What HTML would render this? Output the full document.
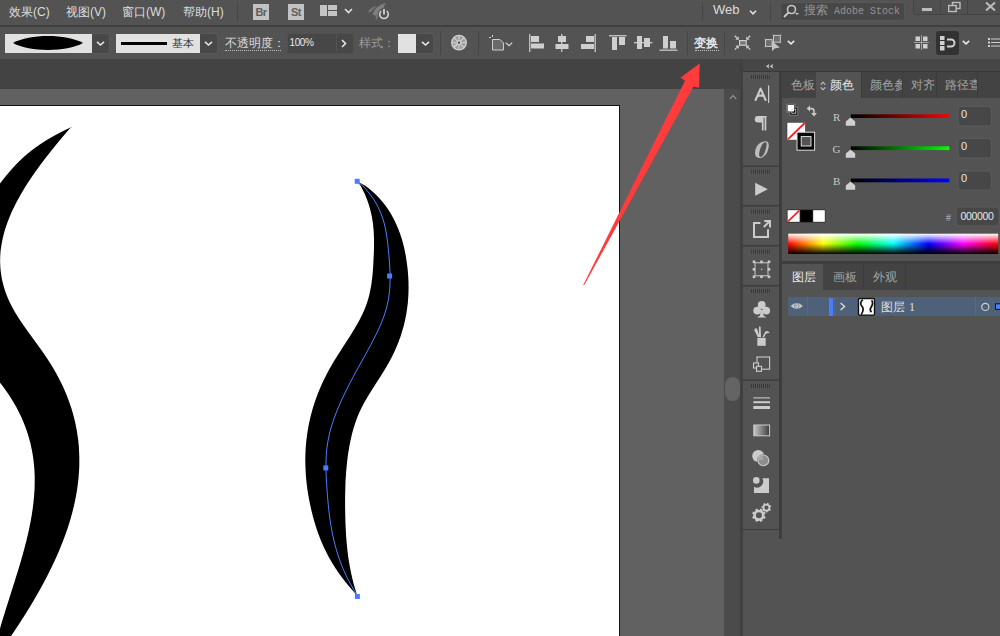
<!DOCTYPE html>
<html><head><meta charset="utf-8">
<style>
*{box-sizing:border-box;margin:0;padding:0}
html,body{width:1000px;height:636px;overflow:hidden;background:#535353;font-family:"Liberation Sans",sans-serif;color:#d6d6d6}
.a{position:absolute}
.menu{position:absolute;font-size:12px;color:#dcdcdc;top:5px;white-space:nowrap;line-height:14px}
.sepv{position:absolute;width:1px;background:#464646}
svg{position:absolute;overflow:visible}
.lbl{position:absolute;font-size:12px;line-height:14px;white-space:nowrap}
.dd{position:absolute;top:33px;height:20.5px;background:#484848;border:1px solid #585858;border-left:none;border-radius:0 3px 3px 0}
</style></head><body>
<!-- ================= MENU BAR ================= -->
<div class="a" style="left:0;top:25px;width:1000px;height:2px;background:#404040"></div>
<div class="menu" style="left:9px">效果(C)</div>
<div class="menu" style="left:66px">视图(V)</div>
<div class="menu" style="left:122px">窗口(W)</div>
<div class="menu" style="left:183px">帮助(H)</div>
<div class="sepv" style="left:237px;top:2px;height:19px"></div>
<div class="a" style="left:253px;top:4px;width:16px;height:16px;background:#c2c2c2;color:#5e5e5e;font-size:11px;font-weight:bold;line-height:16px;text-align:center;letter-spacing:-0.5px">Br</div>
<div class="a" style="left:288px;top:4px;width:16px;height:16px;background:#c2c2c2;color:#5e5e5e;font-size:11px;font-weight:bold;line-height:16px;text-align:center;letter-spacing:-0.5px">St</div>
<svg style="left:320px;top:5px" width="17" height="11"><rect x="0" y="0" width="7" height="11" fill="#c4c4c4"/><rect x="8" y="0" width="9" height="5" fill="#c4c4c4"/><rect x="8" y="6" width="9" height="5" fill="#c4c4c4"/></svg>
<svg style="left:344px;top:8px" width="9" height="6"><polyline points="1,1 4.5,4.5 8,1" fill="none" stroke="#e0e0e0" stroke-width="1.6"/></svg>
<svg style="left:366px;top:1px" width="26" height="20"><path d="M2,10.5 Q5,6 10.5,5 Q7,9 4,11.5 Z" fill="#777"/><path d="M6.5,13 Q9,5 19.5,2 Q17,10 9.5,15 Z" fill="#7e7e7e"/><path d="M9.5,15 L11.5,13 L13,14.5 L10,19 Z" fill="#777"/><circle cx="18" cy="13.3" r="6.2" fill="#535353"/><path d="M15.2,10 A4.3,4.3 0 1 0 20.8,10" fill="none" stroke="#d2d2d2" stroke-width="1.6"/><line x1="18" y1="8" x2="18" y2="13.5" stroke="#d2d2d2" stroke-width="1.8"/></svg>

<div class="sepv" style="left:702px;top:2px;height:19px"></div>
<div class="menu" style="left:713px;top:3px;font-size:13px">Web</div>
<svg style="left:749px;top:10px" width="8" height="5"><polyline points="1,0.8 4,3.8 7,0.8" fill="none" stroke="#e0e0e0" stroke-width="1.6"/></svg>
<div class="sepv" style="left:770px;top:2px;height:19px"></div>
<div class="a" style="left:779.5px;top:1.5px;width:125.5px;height:19.5px;background:#484848;border:1px solid #575757;border-radius:3px"></div>
<svg style="left:783px;top:4px" width="16" height="14"><circle cx="8.5" cy="5.5" r="4" fill="none" stroke="#c8c8c8" stroke-width="1.6"/><line x1="5.5" y1="8.5" x2="1" y2="13" stroke="#c8c8c8" stroke-width="2"/><path d="M12,9 L16,9 L14,11 Z" fill="#c8c8c8"/></svg>
<div class="a" style="left:804px;top:3px;font-size:11.5px;line-height:14px;color:#949494;white-space:nowrap">搜索<span style="font-family:'Liberation Mono',monospace;font-size:10px;position:relative;top:0px"> Adobe Stock</span></div>
<div class="a" style="left:913px;top:-2px;width:90px;height:17px;background:#505050;border:1px solid #444;border-radius:3px"></div>
<div class="a" style="left:940px;top:0;width:1px;height:15px;background:#444"></div>
<div class="a" style="left:967px;top:0;width:1px;height:15px;background:#444"></div>
<div class="a" style="left:922px;top:8px;width:10px;height:3px;background:#bdbdbd"></div>
<svg style="left:948px;top:2px" width="13" height="10"><rect x="4.5" y="0.5" width="7.5" height="6" fill="none" stroke="#bdbdbd" stroke-width="1.4"/><rect x="0.7" y="3.5" width="7.5" height="6" fill="#505050" stroke="#bdbdbd" stroke-width="1.4"/></svg>
<svg style="left:985px;top:2px" width="11" height="9"><path d="M1,0.5 L10,8.5 M10,0.5 L1,8.5" stroke="#bdbdbd" stroke-width="2"/></svg>

<!-- ================= CONTROL BAR ================= -->
<div class="a" style="left:5px;top:34px;width:87px;height:19px;background:#e1e1e1"></div>
<svg style="left:13px;top:36px" width="70" height="14"><path d="M0,7 C17,-2.3 53,-2.3 70,7 C53,16.3 17,16.3 0,7 Z" fill="#000"/></svg>
<div class="dd" style="left:92px;width:18px"></div>
<svg style="left:96px;top:41px" width="9" height="5"><polyline points="1,0.8 4.5,4 8,0.8" fill="none" stroke="#e6e6e6" stroke-width="1.6"/></svg>

<div class="a" style="left:116px;top:34px;width:84px;height:19px;background:#e1e1e1"></div>
<div class="a" style="left:121px;top:42px;width:46px;height:3px;background:#000"></div>
<div class="a" style="left:172px;top:36px;font-size:11px;line-height:14px;color:#3a3a3a;font-family:'Liberation Serif',serif">基本</div>
<div class="dd" style="left:200px;width:18px"></div>
<svg style="left:204px;top:41px" width="9" height="5"><polyline points="1,0.8 4.5,4 8,0.8" fill="none" stroke="#e6e6e6" stroke-width="1.6"/></svg>

<div class="lbl" style="left:225px;top:36px;color:#dcdcdc;font-size:12px">不透明度：</div>
<div class="a" style="left:225px;top:50px;width:56px;height:1px;border-top:1px dotted #bdbdbd"></div>
<div class="a" style="left:286.5px;top:33px;width:67px;height:20.5px;background:#474747;border:1px solid #505050;border-radius:3px"></div>
<div class="a" style="left:336px;top:34px;width:1px;height:18px;background:#535353"></div>
<div class="lbl" style="left:289.5px;top:36px;font-size:10px;color:#e8e8e8;letter-spacing:-0.4px">100%</div>
<svg style="left:341px;top:39px" width="6" height="9"><polyline points="1,1 4.5,4.5 1,8" fill="none" stroke="#e6e6e6" stroke-width="1.6"/></svg>
<div class="lbl" style="left:359px;top:36px;color:#9d9d9d">样式：</div>
<div class="a" style="left:398px;top:34px;width:18px;height:19px;background:#e1e1e1"></div>
<div class="dd" style="left:416px;width:18px"></div>
<svg style="left:421px;top:41px" width="9" height="5"><polyline points="1,0.8 4.5,4 8,0.8" fill="none" stroke="#e6e6e6" stroke-width="1.6"/></svg>
<div class="sepv" style="left:440px;top:31px;height:24px"></div>
<!-- recolor wheel -->
<svg style="left:451px;top:35px" width="16" height="16"><circle cx="8" cy="7.7" r="7.9" fill="#d0d0d0"/><circle cx="8" cy="7.7" r="6.6" fill="#9c9c9c"/><path d="M2,10 L7,7.7 L5,12.5 Z" fill="#b4b4b4"/><g stroke="#d0d0d0" stroke-width="1.1"><line x1="8" y1="0.5" x2="8" y2="15"/><line x1="0.5" y1="7.7" x2="15.5" y2="7.7"/><line x1="2.7" y1="2.4" x2="13.3" y2="13"/><line x1="13.3" y1="2.4" x2="2.7" y2="13"/></g><circle cx="8" cy="7.7" r="2.4" fill="#d0d0d0"/><circle cx="8" cy="7.7" r="1.15" fill="#454545"/></svg>
<div class="sepv" style="left:478px;top:31px;height:24px"></div>
<!-- doc icon -->
<svg style="left:489px;top:35px" width="16" height="16"><line x1="0" y1="2.5" x2="2" y2="2.5" stroke="#cfcfcf"/><line x1="3.5" y1="0" x2="3.5" y2="2" stroke="#cfcfcf"/><path d="M3.5,4.5 L11,4.5 L14.5,8 L14.5,15 L3.5,15 Z" fill="#6a6a6a" stroke="#cfcfcf" stroke-width="1"/></svg>
<svg style="left:505px;top:42px" width="8" height="5"><polyline points="0.8,0.8 4,3.8 7.2,0.8" fill="none" stroke="#cfcfcf" stroke-width="1.2"/></svg>
<!-- align icons -->
<svg style="left:528px;top:34px" width="18" height="18"><rect x="1" y="0" width="1.4" height="18" fill="#bfbfbf"/><rect x="3" y="2" width="8" height="6" fill="#cfcfcf"/><rect x="3" y="9.5" width="13" height="5" fill="#cfcfcf"/></svg>
<svg style="left:554px;top:34px" width="18" height="18"><rect x="7" y="0" width="1.4" height="18" fill="#bfbfbf"/><rect x="4" y="2" width="8" height="6" fill="#cfcfcf"/><rect x="1.5" y="10" width="13" height="5" fill="#cfcfcf"/></svg>
<svg style="left:579px;top:34px" width="18" height="18"><rect x="15.5" y="0" width="1.4" height="18" fill="#bfbfbf"/><rect x="7" y="2" width="8" height="6" fill="#cfcfcf"/><rect x="2" y="10" width="13" height="5" fill="#cfcfcf"/></svg>
<svg style="left:608px;top:34px" width="19" height="17"><rect x="1" y="1" width="17.5" height="1.4" fill="#bfbfbf"/><rect x="4" y="3" width="5" height="13" fill="#cfcfcf"/><rect x="11" y="3" width="6" height="8" fill="#cfcfcf"/></svg>
<svg style="left:634px;top:35px" width="19" height="15"><rect x="0" y="7" width="18.5" height="1.4" fill="#bfbfbf"/><rect x="3" y="1" width="5" height="13" fill="#cfcfcf"/><rect x="10" y="3" width="6" height="9" fill="#cfcfcf"/></svg>
<svg style="left:659px;top:35px" width="19" height="17"><rect x="0.5" y="14.5" width="18" height="1.4" fill="#bfbfbf"/><rect x="4" y="1" width="5" height="12.5" fill="#cfcfcf"/><rect x="11" y="6" width="6" height="7.5" fill="#cfcfcf"/></svg>
<div class="sepv" style="left:687px;top:31px;height:24px"></div>
<div class="lbl" style="left:694px;top:36px;font-size:12px;color:#e6e6e6;font-weight:bold">变换</div>
<div class="a" style="left:695px;top:50px;width:24px;height:1px;border-top:1px dotted #bdbdbd"></div>
<div class="sepv" style="left:724px;top:31px;height:24px"></div>
<!-- isolate icon -->
<svg style="left:734px;top:35px" width="18" height="16"><rect x="5.6" y="5.6" width="6.6" height="4.6" fill="#767676" stroke="#cfcfcf" stroke-width="1.2"/><g stroke="#cfcfcf" stroke-width="1.3" fill="none"><path d="M0.8,0.8 L3.5,3.5 M16.2,0.8 L13.5,3.5 M0.8,14.6 L3.5,11.9 M16.2,14.6 L13.5,11.9"/></g><g fill="#cfcfcf"><path d="M4.8,4.8 L4.8,1.4 L1.4,4.8 Z M12.2,4.8 L12.2,1.4 L15.6,4.8 Z M4.8,10.6 L4.8,14 L1.4,10.6 Z M12.2,10.6 L12.2,14 L15.6,10.6 Z"/></g></svg>
<!-- select similar -->
<svg style="left:764px;top:34px" width="18" height="18"><rect x="1.5" y="5.6" width="6.6" height="6.8" fill="#6e6e6e" stroke="#c8c8c8" stroke-width="1"/><rect x="9.5" y="1.4" width="6.8" height="6.8" fill="#6e6e6e" stroke="#c8c8c8" stroke-width="1"/><g stroke="#c8c8c8" stroke-width="1"><path d="M1.5,5.6 L0.6,4.7 M8.1,12.4 L9,13.3 M1.5,12.4 L0.6,13.3 M9.5,1.4 L8.6,0.5 M16.3,1.4 L17.2,0.5 M16.3,8.2 L17.2,9.1 M9.5,8.2 L8.6,9.1"/></g><path d="M8,7.2 L8,17.2 L10.6,14.4 L15.8,13.6 Z" fill="#c4c4c4"/></svg>
<svg style="left:787px;top:40px" width="8" height="5"><polyline points="0.8,0.8 4,3.8 7.2,0.8" fill="none" stroke="#e6e6e6" stroke-width="1.6"/></svg>
<!-- pixel grid -->
<svg style="left:914px;top:35px" width="15" height="15"><rect x="0" y="7" width="15" height="1" fill="#a0a0a0"/><rect x="7" y="0" width="1" height="15" fill="#a0a0a0"/><rect x="1.5" y="1.5" width="4.5" height="4.5" fill="#cfcfcf"/><rect x="9" y="1.5" width="4.5" height="4.5" fill="#cfcfcf"/><rect x="1.5" y="9" width="4.5" height="4.5" fill="#cfcfcf"/><rect x="9" y="9" width="4.5" height="4.5" fill="#cfcfcf"/></svg>
<div class="a" style="left:936px;top:31px;width:23px;height:24px;background:#323232;border-radius:3px"></div>
<svg style="left:940px;top:36px" width="15" height="15"><rect x="0" y="0" width="4.5" height="4" fill="#d0d0d0"/><rect x="0" y="5" width="4.5" height="4" fill="#d0d0d0"/><rect x="0" y="10" width="4.5" height="4.5" fill="#d0d0d0"/><path d="M7,3.5 L11,3.5 A3.5,3.5 0 0 1 11,10.5 L7,10.5" fill="none" stroke="#d0d0d0" stroke-width="2"/></svg>
<svg style="left:962px;top:40px" width="8" height="5"><polyline points="0.8,0.8 4,3.8 7.2,0.8" fill="none" stroke="#e6e6e6" stroke-width="1.6"/></svg>
<svg style="left:988px;top:38px" width="14" height="10"><rect x="0" y="0" width="2" height="2" fill="#d0d0d0"/><rect x="0" y="3.5" width="2" height="2" fill="#d0d0d0"/><rect x="0" y="7" width="2" height="2" fill="#d0d0d0"/><rect x="3" y="0.5" width="11" height="1" fill="#d0d0d0"/><rect x="3" y="4" width="11" height="1" fill="#d0d0d0"/><rect x="3" y="7.5" width="11" height="1" fill="#d0d0d0"/></svg>
<!-- CONTROL_END -->

<!-- ================= TAB BAR / CANVAS ================= -->
<div class="a" style="left:0;top:59px;width:740px;height:29.5px;background:#434343"></div>
<div class="a" style="left:0;top:88.5px;width:724px;height:548px;background:#616161"></div>
<div class="a" style="left:724px;top:88.5px;width:16px;height:548px;background:#4b4b4b"></div>
<svg style="left:729px;top:94px" width="8" height="6"><polyline points="0.8,5 4,1.5 7.2,5" fill="none" stroke="#8a8a8a" stroke-width="1.3"/></svg>
<div class="a" style="left:725px;top:376.5px;width:15px;height:24.5px;background:#646464;border-radius:7.5px"></div>
<div class="a" style="left:740px;top:59px;width:3px;height:577px;background:#404040"></div>
<div class="a" style="left:-2px;top:105px;width:622px;height:540px;background:#fff;border:1px solid #111"></div>
<svg style="left:0;top:0" width="1000" height="636"><path d="M72.8,126.7 L70.3,128.0 L68.5,130.0 L66.8,132.0 L65.1,134.0 L63.4,136.0 L61.7,138.0 L60.0,140.0 L58.4,142.0 L56.7,144.0 L55.1,146.0 L53.5,148.0 L51.8,150.0 L50.3,152.0 L48.7,154.0 L47.1,156.0 L45.6,158.0 L44.0,160.0 L42.5,162.0 L41.0,164.0 L39.5,166.0 L38.1,168.0 L36.6,170.0 L35.2,172.0 L33.8,174.0 L32.4,176.0 L31.1,178.0 L29.7,180.0 L28.4,182.0 L27.1,184.0 L25.8,186.0 L24.6,188.0 L23.4,190.0 L22.2,192.0 L21.0,194.0 L19.9,196.0 L18.8,198.0 L17.7,200.0 L16.6,202.0 L15.6,204.0 L14.6,206.0 L13.6,208.0 L12.6,210.0 L11.7,212.0 L10.8,214.0 L10.0,216.0 L9.2,218.0 L8.4,220.0 L7.6,222.0 L6.9,224.0 L6.2,226.0 L5.5,228.0 L4.9,230.0 L4.3,232.0 L3.8,234.0 L3.3,236.0 L2.8,238.0 L2.4,240.0 L2.0,242.0 L1.6,244.0 L1.3,246.0 L1.0,248.0 L0.7,250.0 L0.5,252.0 L0.4,254.0 L0.2,256.0 L0.2,258.0 L0.1,260.0 L0.1,262.0 L0.2,264.0 L0.3,266.0 L0.4,268.0 L0.6,270.0 L0.8,272.0 L1.1,274.0 L1.4,276.0 L1.7,278.0 L2.1,280.0 L2.6,282.0 L3.1,284.0 L3.6,286.0 L4.2,288.0 L4.8,290.0 L5.5,292.0 L6.2,294.0 L7.0,296.0 L7.8,298.0 L8.7,300.0 L9.6,302.0 L10.6,304.0 L11.6,306.0 L12.7,308.0 L13.8,310.0 L14.9,312.0 L16.1,314.0 L17.4,316.0 L18.6,318.0 L19.9,320.0 L21.3,322.0 L22.6,324.0 L24.0,326.0 L25.4,328.0 L26.8,330.0 L28.3,332.0 L29.7,334.0 L31.2,336.0 L32.6,338.0 L34.1,340.0 L35.5,342.0 L37.0,344.0 L38.4,346.0 L39.9,348.0 L41.3,350.0 L42.7,352.0 L44.1,354.0 L45.5,356.0 L46.8,358.0 L48.1,360.0 L49.4,362.0 L50.7,364.0 L51.9,366.0 L53.1,368.0 L54.3,370.0 L55.4,372.0 L56.6,374.0 L57.6,376.0 L58.7,378.0 L59.7,380.0 L60.7,382.0 L61.7,384.0 L62.7,386.0 L63.6,388.0 L64.5,390.0 L65.3,392.0 L66.2,394.0 L67.0,396.0 L67.7,398.0 L68.5,400.0 L69.2,402.0 L69.9,404.0 L70.6,406.0 L71.3,408.0 L71.9,410.0 L72.5,412.0 L73.0,414.0 L73.6,416.0 L74.1,418.0 L74.6,420.0 L75.1,422.0 L75.5,424.0 L75.9,426.0 L76.3,428.0 L76.7,430.0 L77.0,432.0 L77.3,434.0 L77.6,436.0 L77.9,438.0 L78.2,440.0 L78.4,442.0 L78.6,444.0 L78.8,446.0 L78.9,448.0 L79.0,450.0 L79.1,452.0 L79.2,454.0 L79.3,456.0 L79.3,458.0 L79.3,460.0 L79.3,462.0 L79.3,464.0 L79.3,466.0 L79.2,468.0 L79.1,470.0 L79.0,472.0 L78.8,474.0 L78.7,476.0 L78.5,478.0 L78.3,480.0 L78.1,482.0 L77.8,484.0 L77.6,486.0 L77.3,488.0 L77.0,490.0 L76.7,492.0 L76.3,494.0 L76.0,496.0 L75.6,498.0 L75.2,500.0 L74.8,502.0 L74.3,504.0 L73.9,506.0 L73.4,508.0 L72.9,510.0 L72.4,512.0 L71.9,514.0 L71.3,516.0 L70.8,518.0 L70.2,520.0 L69.6,522.0 L69.0,524.0 L68.3,526.0 L67.7,528.0 L67.0,530.0 L66.3,532.0 L65.6,534.0 L64.9,536.0 L64.1,538.0 L63.4,540.0 L62.6,542.0 L61.8,544.0 L61.0,546.0 L60.2,548.0 L59.4,550.0 L58.5,552.0 L57.7,554.0 L56.8,556.0 L55.9,558.0 L55.0,560.0 L54.1,562.0 L53.1,564.0 L52.2,566.0 L51.2,568.0 L50.2,570.0 L49.2,572.0 L48.2,574.0 L47.2,576.0 L46.2,578.0 L45.1,580.0 L44.1,582.0 L43.0,584.0 L41.9,586.0 L40.8,588.0 L39.7,590.0 L38.6,592.0 L37.4,594.0 L36.3,596.0 L35.1,598.0 L34.0,600.0 L32.8,602.0 L31.6,604.0 L30.4,606.0 L29.2,608.0 L27.9,610.0 L26.7,612.0 L25.5,614.0 L24.2,616.0 L22.9,618.0 L21.6,620.0 L20.4,622.0 L19.1,624.0 L17.7,626.0 L16.4,628.0 L15.1,630.0 L13.8,632.0 L12.4,634.0 L11.1,636.0 L9.7,638.0 L8.3,640.0 L6.9,642.0 L5.5,644.0 L4.1,646.0 L-4.7,646.0 L-4.2,644.0 L-3.7,642.0 L-3.2,640.0 L-2.7,638.0 L-2.1,636.0 L-1.6,634.0 L-1.0,632.0 L-0.4,630.0 L0.2,628.0 L0.7,626.0 L1.3,624.0 L1.9,622.0 L2.5,620.0 L3.1,618.0 L3.7,616.0 L4.4,614.0 L5.0,612.0 L5.6,610.0 L6.2,608.0 L6.9,606.0 L7.5,604.0 L8.1,602.0 L8.8,600.0 L9.4,598.0 L10.0,596.0 L10.7,594.0 L11.3,592.0 L11.9,590.0 L12.6,588.0 L13.2,586.0 L13.8,584.0 L14.5,582.0 L15.1,580.0 L15.7,578.0 L16.3,576.0 L17.0,574.0 L17.6,572.0 L18.2,570.0 L18.8,568.0 L19.4,566.0 L20.0,564.0 L20.6,562.0 L21.2,560.0 L21.7,558.0 L22.3,556.0 L22.9,554.0 L23.4,552.0 L24.0,550.0 L24.5,548.0 L25.0,546.0 L25.5,544.0 L26.1,542.0 L26.6,540.0 L27.0,538.0 L27.5,536.0 L28.0,534.0 L28.4,532.0 L28.9,530.0 L29.3,528.0 L29.7,526.0 L30.1,524.0 L30.5,522.0 L30.9,520.0 L31.2,518.0 L31.6,516.0 L31.9,514.0 L32.2,512.0 L32.5,510.0 L32.8,508.0 L33.0,506.0 L33.3,504.0 L33.5,502.0 L33.7,500.0 L33.9,498.0 L34.1,496.0 L34.2,494.0 L34.4,492.0 L34.5,490.0 L34.6,488.0 L34.6,486.0 L34.7,484.0 L34.7,482.0 L34.7,480.0 L34.7,478.0 L34.7,476.0 L34.6,474.0 L34.5,472.0 L34.4,470.0 L34.3,468.0 L34.1,466.0 L33.9,464.0 L33.7,462.0 L33.5,460.0 L33.2,458.0 L32.9,456.0 L32.6,454.0 L32.2,452.0 L31.9,450.0 L31.4,448.0 L31.0,446.0 L30.6,444.0 L30.1,442.0 L29.5,440.0 L29.0,438.0 L28.4,436.0 L27.8,434.0 L27.1,432.0 L26.5,430.0 L25.7,428.0 L25.0,426.0 L24.2,424.0 L23.4,422.0 L22.6,420.0 L21.7,418.0 L20.8,416.0 L19.8,414.0 L18.8,412.0 L17.8,410.0 L16.8,408.0 L15.7,406.0 L14.5,404.0 L13.4,402.0 L12.1,400.0 L10.9,398.0 L9.6,396.0 L8.3,394.0 L6.9,392.0 L5.5,390.0 L4.1,388.0 L2.6,386.0 L1.1,384.0 L-0.5,382.0 L-2.1,380.0 L-3.8,378.0 L-5.5,376.0 L-60.0,376.0 L-60.0,194.0 L-8.3,194.0 L-6.7,192.0 L-5.1,190.0 L-3.5,188.0 L-2.0,186.0 L-0.4,184.0 L1.2,182.0 L2.7,180.0 L4.3,178.0 L5.9,176.0 L7.6,174.0 L9.3,172.0 L11.0,170.0 L12.8,168.0 L14.6,166.0 L16.5,164.0 L18.5,162.0 L20.5,160.0 L22.7,158.0 L24.9,156.0 L27.2,154.0 L29.7,152.0 L32.2,150.0 L34.9,148.0 L37.7,146.0 L40.6,144.0 L43.6,142.0 L46.8,140.0 L50.2,138.0 L53.7,136.0 L57.4,134.0 L61.2,132.0 L65.2,130.0 L69.4,128.0Z" fill="#000"/><path d="M357.4,181.6 L365.7,186.0 L368.3,188.0 L370.7,190.0 L373.0,192.0 L375.2,194.0 L377.2,196.0 L379.1,198.0 L380.9,200.0 L382.6,202.0 L384.2,204.0 L385.7,206.0 L387.2,208.0 L388.5,210.0 L389.8,212.0 L391.0,214.0 L392.1,216.0 L393.2,218.0 L394.2,220.0 L395.2,222.0 L396.1,224.0 L397.0,226.0 L397.9,228.0 L398.7,230.0 L399.4,232.0 L400.2,234.0 L400.8,236.0 L401.5,238.0 L402.1,240.0 L402.7,242.0 L403.2,244.0 L403.7,246.0 L404.2,248.0 L404.6,250.0 L405.0,252.0 L405.4,254.0 L405.8,256.0 L406.1,258.0 L406.4,260.0 L406.7,262.0 L407.0,264.0 L407.2,266.0 L407.5,268.0 L407.7,270.0 L407.9,272.0 L408.0,274.0 L408.2,276.0 L408.3,278.0 L408.4,280.0 L408.5,282.0 L408.5,284.0 L408.5,286.0 L408.6,288.0 L408.5,290.0 L408.5,292.0 L408.4,294.0 L408.3,296.0 L408.2,298.0 L408.0,300.0 L407.9,302.0 L407.7,304.0 L407.4,306.0 L407.2,308.0 L406.9,310.0 L406.6,312.0 L406.3,314.0 L405.9,316.0 L405.5,318.0 L405.1,320.0 L404.6,322.0 L404.2,324.0 L403.7,326.0 L403.1,328.0 L402.5,330.0 L401.9,332.0 L401.3,334.0 L400.7,336.0 L400.0,338.0 L399.2,340.0 L398.5,342.0 L397.7,344.0 L396.9,346.0 L396.0,348.0 L395.2,350.0 L394.2,352.0 L393.3,354.0 L392.3,356.0 L391.3,358.0 L390.2,360.0 L389.2,362.0 L388.0,364.0 L386.9,366.0 L385.7,368.0 L384.5,370.0 L383.3,372.0 L382.0,374.0 L380.8,376.0 L379.5,378.0 L378.2,380.0 L376.9,382.0 L375.6,384.0 L374.4,386.0 L373.1,388.0 L371.8,390.0 L370.6,392.0 L369.3,394.0 L368.1,396.0 L366.9,398.0 L365.8,400.0 L364.6,402.0 L363.5,404.0 L362.5,406.0 L361.4,408.0 L360.5,410.0 L359.5,412.0 L358.7,414.0 L357.8,416.0 L357.0,418.0 L356.3,420.0 L355.6,422.0 L354.9,424.0 L354.3,426.0 L353.6,428.0 L353.1,430.0 L352.5,432.0 L352.0,434.0 L351.5,436.0 L351.1,438.0 L350.6,440.0 L350.2,442.0 L349.8,444.0 L349.4,446.0 L349.1,448.0 L348.8,450.0 L348.4,452.0 L348.1,454.0 L347.8,456.0 L347.6,458.0 L347.3,460.0 L347.1,462.0 L346.9,464.0 L346.7,466.0 L346.5,468.0 L346.3,470.0 L346.1,472.0 L346.0,474.0 L345.9,476.0 L345.7,478.0 L345.6,480.0 L345.5,482.0 L345.4,484.0 L345.4,486.0 L345.3,488.0 L345.3,490.0 L345.2,492.0 L345.2,494.0 L345.1,496.0 L345.1,498.0 L345.1,500.0 L345.1,502.0 L345.1,504.0 L345.1,506.0 L345.1,508.0 L345.2,510.0 L345.2,512.0 L345.2,514.0 L345.3,516.0 L345.3,518.0 L345.4,520.0 L345.4,522.0 L345.5,524.0 L345.6,526.0 L345.7,528.0 L345.8,530.0 L345.9,532.0 L346.0,534.0 L346.1,536.0 L346.3,538.0 L346.4,540.0 L346.6,542.0 L346.8,544.0 L347.0,546.0 L347.2,548.0 L347.4,550.0 L347.6,552.0 L347.9,554.0 L348.1,556.0 L348.4,558.0 L348.7,560.0 L349.0,562.0 L349.4,564.0 L349.7,566.0 L350.1,568.0 L350.5,570.0 L350.9,572.0 L351.3,574.0 L351.8,576.0 L352.2,578.0 L352.7,580.0 L353.2,582.0 L353.7,584.0 L354.3,586.0 L354.9,588.0 L355.5,590.0 L356.1,592.0 L357.2,596.4 L354.1,592.0 L352.2,590.0 L350.5,588.0 L348.8,586.0 L347.1,584.0 L345.5,582.0 L343.9,580.0 L342.4,578.0 L340.9,576.0 L339.4,574.0 L338.0,572.0 L336.7,570.0 L335.3,568.0 L334.1,566.0 L332.8,564.0 L331.6,562.0 L330.5,560.0 L329.3,558.0 L328.2,556.0 L327.2,554.0 L326.2,552.0 L325.2,550.0 L324.2,548.0 L323.3,546.0 L322.4,544.0 L321.6,542.0 L320.7,540.0 L319.9,538.0 L319.2,536.0 L318.4,534.0 L317.7,532.0 L317.0,530.0 L316.3,528.0 L315.7,526.0 L315.1,524.0 L314.5,522.0 L313.9,520.0 L313.3,518.0 L312.8,516.0 L312.3,514.0 L311.8,512.0 L311.3,510.0 L310.9,508.0 L310.4,506.0 L310.0,504.0 L309.6,502.0 L309.2,500.0 L308.8,498.0 L308.5,496.0 L308.1,494.0 L307.8,492.0 L307.5,490.0 L307.2,488.0 L307.0,486.0 L306.7,484.0 L306.5,482.0 L306.3,480.0 L306.1,478.0 L305.9,476.0 L305.8,474.0 L305.7,472.0 L305.6,470.0 L305.5,468.0 L305.4,466.0 L305.4,464.0 L305.3,462.0 L305.3,460.0 L305.3,458.0 L305.4,456.0 L305.4,454.0 L305.5,452.0 L305.6,450.0 L305.7,448.0 L305.9,446.0 L306.0,444.0 L306.2,442.0 L306.4,440.0 L306.7,438.0 L306.9,436.0 L307.2,434.0 L307.5,432.0 L307.8,430.0 L308.2,428.0 L308.5,426.0 L308.9,424.0 L309.3,422.0 L309.8,420.0 L310.2,418.0 L310.7,416.0 L311.2,414.0 L311.8,412.0 L312.3,410.0 L312.9,408.0 L313.5,406.0 L314.2,404.0 L314.8,402.0 L315.5,400.0 L316.2,398.0 L317.0,396.0 L317.7,394.0 L318.5,392.0 L319.3,390.0 L320.2,388.0 L321.0,386.0 L321.9,384.0 L322.8,382.0 L323.8,380.0 L324.8,378.0 L325.8,376.0 L326.8,374.0 L327.8,372.0 L328.9,370.0 L330.0,368.0 L331.2,366.0 L332.3,364.0 L333.5,362.0 L334.7,360.0 L336.0,358.0 L337.2,356.0 L338.5,354.0 L339.8,352.0 L341.0,350.0 L342.3,348.0 L343.6,346.0 L344.9,344.0 L346.2,342.0 L347.5,340.0 L348.8,338.0 L350.1,336.0 L351.3,334.0 L352.5,332.0 L353.8,330.0 L355.0,328.0 L356.1,326.0 L357.3,324.0 L358.4,322.0 L359.5,320.0 L360.5,318.0 L361.5,316.0 L362.5,314.0 L363.4,312.0 L364.3,310.0 L365.1,308.0 L365.9,306.0 L366.6,304.0 L367.3,302.0 L367.9,300.0 L368.5,298.0 L369.0,296.0 L369.5,294.0 L369.9,292.0 L370.3,290.0 L370.7,288.0 L371.1,286.0 L371.4,284.0 L371.7,282.0 L371.9,280.0 L372.2,278.0 L372.4,276.0 L372.6,274.0 L372.8,272.0 L372.9,270.0 L373.1,268.0 L373.2,266.0 L373.3,264.0 L373.4,262.0 L373.5,260.0 L373.6,258.0 L373.7,256.0 L373.8,254.0 L373.9,252.0 L373.9,250.0 L374.0,248.0 L374.0,246.0 L374.0,244.0 L374.0,242.0 L374.0,240.0 L374.0,238.0 L373.9,236.0 L373.8,234.0 L373.7,232.0 L373.6,230.0 L373.4,228.0 L373.2,226.0 L373.0,224.0 L372.7,222.0 L372.4,220.0 L372.1,218.0 L371.7,216.0 L371.3,214.0 L370.8,212.0 L370.3,210.0 L369.8,208.0 L369.2,206.0 L368.6,204.0 L367.9,202.0 L367.2,200.0 L366.4,198.0 L365.6,196.0 L364.8,194.0 L363.8,192.0 L362.8,190.0 L361.8,188.0 L360.7,186.0Z" fill="#000"/><path d="M357.4,181.6 L362.9,186.0 L364.8,188.0 L366.6,190.0 L368.2,192.0 L369.8,194.0 L371.3,196.0 L372.7,198.0 L374.1,200.0 L375.3,202.0 L376.5,204.0 L377.5,206.0 L378.5,208.0 L379.5,210.0 L380.4,212.0 L381.2,214.0 L381.9,216.0 L382.6,218.0 L383.2,220.0 L383.8,222.0 L384.4,224.0 L384.8,226.0 L385.3,228.0 L385.7,230.0 L386.1,232.0 L386.4,234.0 L386.7,236.0 L387.0,238.0 L387.3,240.0 L387.5,242.0 L387.8,244.0 L388.0,246.0 L388.2,248.0 L388.4,250.0 L388.6,252.0 L388.8,254.0 L388.9,256.0 L389.1,258.0 L389.3,260.0 L389.4,262.0 L389.6,264.0 L389.7,266.0 L389.8,268.0 L389.9,270.0 L390.0,272.0 L390.1,274.0 L390.1,276.0 L390.1,278.0 L390.1,280.0 L390.0,282.0 L390.0,284.0 L389.9,286.0 L389.8,288.0 L389.6,290.0 L389.4,292.0 L389.2,294.0 L388.9,296.0 L388.6,298.0 L388.3,300.0 L387.9,302.0 L387.4,304.0 L387.0,306.0 L386.5,308.0 L385.9,310.0 L385.3,312.0 L384.6,314.0 L384.0,316.0 L383.2,318.0 L382.5,320.0 L381.7,322.0 L380.9,324.0 L380.0,326.0 L379.1,328.0 L378.2,330.0 L377.3,332.0 L376.3,334.0 L375.3,336.0 L374.3,338.0 L373.3,340.0 L372.2,342.0 L371.2,344.0 L370.1,346.0 L369.0,348.0 L368.0,350.0 L366.9,352.0 L365.8,354.0 L364.7,356.0 L363.5,358.0 L362.4,360.0 L361.3,362.0 L360.2,364.0 L359.1,366.0 L358.0,368.0 L356.9,370.0 L355.8,372.0 L354.7,374.0 L353.7,376.0 L352.6,378.0 L351.5,380.0 L350.5,382.0 L349.4,384.0 L348.4,386.0 L347.4,388.0 L346.4,390.0 L345.4,392.0 L344.4,394.0 L343.5,396.0 L342.5,398.0 L341.6,400.0 L340.7,402.0 L339.8,404.0 L339.0,406.0 L338.1,408.0 L337.3,410.0 L336.5,412.0 L335.7,414.0 L335.0,416.0 L334.2,418.0 L333.5,420.0 L332.9,422.0 L332.2,424.0 L331.6,426.0 L331.0,428.0 L330.4,430.0 L329.9,432.0 L329.4,434.0 L329.0,436.0 L328.5,438.0 L328.2,440.0 L327.8,442.0 L327.5,444.0 L327.2,446.0 L326.9,448.0 L326.7,450.0 L326.5,452.0 L326.4,454.0 L326.3,456.0 L326.1,458.0 L326.1,460.0 L326.0,462.0 L326.0,464.0 L326.0,466.0 L326.0,468.0 L326.0,470.0 L326.1,472.0 L326.1,474.0 L326.2,476.0 L326.3,478.0 L326.4,480.0 L326.5,482.0 L326.6,484.0 L326.8,486.0 L326.9,488.0 L327.0,490.0 L327.2,492.0 L327.3,494.0 L327.5,496.0 L327.7,498.0 L327.8,500.0 L328.0,502.0 L328.2,504.0 L328.4,506.0 L328.6,508.0 L328.8,510.0 L329.1,512.0 L329.3,514.0 L329.5,516.0 L329.8,518.0 L330.1,520.0 L330.4,522.0 L330.7,524.0 L331.0,526.0 L331.4,528.0 L331.7,530.0 L332.1,532.0 L332.5,534.0 L332.9,536.0 L333.4,538.0 L333.8,540.0 L334.3,542.0 L334.8,544.0 L335.3,546.0 L335.9,548.0 L336.4,550.0 L337.0,552.0 L337.6,554.0 L338.3,556.0 L339.0,558.0 L339.7,560.0 L340.4,562.0 L341.2,564.0 L341.9,566.0 L342.8,568.0 L343.6,570.0 L344.5,572.0 L345.4,574.0 L346.4,576.0 L347.3,578.0 L348.4,580.0 L349.4,582.0 L350.5,584.0 L351.6,586.0 L352.8,588.0 L354.0,590.0 L355.2,592.0 L357.2,596.4" fill="none" stroke="#4a7cff" stroke-width="1"/><rect x="354.7" y="178.8" width="5" height="5" fill="#4a7cff"/><rect x="387.1" y="273.5" width="5" height="5" fill="#4a7cff"/><rect x="323.3" y="465.4" width="5" height="5" fill="#4a7cff"/><rect x="354.9" y="594.0" width="5" height="5" fill="#4a7cff"/>
<path d="M699.7,63.2 L680.5,77.7 L685,80.8 L583,285.5 L584.6,284.6 L693.5,86.5 L699.1,87.7 Z" fill="#ff3b3b"/></svg>
<!-- CANVAS_END -->

<!-- ================= DOCK ================= -->
<div class="a" style="left:743px;top:59px;width:257px;height:12px;background:#474747"></div>
<svg style="left:766px;top:63.5px" width="8" height="5"><path d="M0,2.3 L3.4,0 L2.6,2.3 L3.4,4.6 Z M3.8,2.3 L7.2,0 L6.4,2.3 L7.2,4.6 Z" fill="#d0d0d0"/></svg>
<div class="a" style="left:743px;top:71px;width:257px;height:1px;background:#393939"></div>
<div class="a" style="left:743px;top:72px;width:36px;height:564px;background:#3d3d3d"></div>
<div class="a" style="left:743px;top:530px;width:36px;height:106px;background:#535353"></div>
<div class="a" style="left:779px;top:72px;width:2.5px;height:467px;background:#3d3d3d"></div>
<svg style="left:0;top:0" width="1000" height="636"><rect x="743" y="72.0" width="36" height="93.5" fill="#535353"/><rect x="743" y="167.0" width="36" height="38.0" fill="#535353"/><rect x="743" y="206.5" width="36" height="38.5" fill="#535353"/><rect x="743" y="246.5" width="36" height="38.5" fill="#535353"/><rect x="743" y="286.5" width="36" height="93.0" fill="#535353"/><rect x="743" y="381.0" width="36" height="148.0" fill="#535353"/><rect x="751.0" y="75.0" width="1" height="4" fill="#3a3a3a"/><rect x="753.0" y="75.0" width="1" height="4" fill="#3a3a3a"/><rect x="755.0" y="75.0" width="1" height="4" fill="#3a3a3a"/><rect x="757.0" y="75.0" width="1" height="4" fill="#3a3a3a"/><rect x="759.0" y="75.0" width="1" height="4" fill="#3a3a3a"/><rect x="761.0" y="75.0" width="1" height="4" fill="#3a3a3a"/><rect x="763.0" y="75.0" width="1" height="4" fill="#3a3a3a"/><rect x="765.0" y="75.0" width="1" height="4" fill="#3a3a3a"/><rect x="767.0" y="75.0" width="1" height="4" fill="#3a3a3a"/><rect x="769.0" y="75.0" width="1" height="4" fill="#3a3a3a"/><rect x="751.0" y="169.5" width="1" height="4" fill="#3a3a3a"/><rect x="753.0" y="169.5" width="1" height="4" fill="#3a3a3a"/><rect x="755.0" y="169.5" width="1" height="4" fill="#3a3a3a"/><rect x="757.0" y="169.5" width="1" height="4" fill="#3a3a3a"/><rect x="759.0" y="169.5" width="1" height="4" fill="#3a3a3a"/><rect x="761.0" y="169.5" width="1" height="4" fill="#3a3a3a"/><rect x="763.0" y="169.5" width="1" height="4" fill="#3a3a3a"/><rect x="765.0" y="169.5" width="1" height="4" fill="#3a3a3a"/><rect x="767.0" y="169.5" width="1" height="4" fill="#3a3a3a"/><rect x="769.0" y="169.5" width="1" height="4" fill="#3a3a3a"/><rect x="751.0" y="209.5" width="1" height="4" fill="#3a3a3a"/><rect x="753.0" y="209.5" width="1" height="4" fill="#3a3a3a"/><rect x="755.0" y="209.5" width="1" height="4" fill="#3a3a3a"/><rect x="757.0" y="209.5" width="1" height="4" fill="#3a3a3a"/><rect x="759.0" y="209.5" width="1" height="4" fill="#3a3a3a"/><rect x="761.0" y="209.5" width="1" height="4" fill="#3a3a3a"/><rect x="763.0" y="209.5" width="1" height="4" fill="#3a3a3a"/><rect x="765.0" y="209.5" width="1" height="4" fill="#3a3a3a"/><rect x="767.0" y="209.5" width="1" height="4" fill="#3a3a3a"/><rect x="769.0" y="209.5" width="1" height="4" fill="#3a3a3a"/><rect x="751.0" y="249.5" width="1" height="4" fill="#3a3a3a"/><rect x="753.0" y="249.5" width="1" height="4" fill="#3a3a3a"/><rect x="755.0" y="249.5" width="1" height="4" fill="#3a3a3a"/><rect x="757.0" y="249.5" width="1" height="4" fill="#3a3a3a"/><rect x="759.0" y="249.5" width="1" height="4" fill="#3a3a3a"/><rect x="761.0" y="249.5" width="1" height="4" fill="#3a3a3a"/><rect x="763.0" y="249.5" width="1" height="4" fill="#3a3a3a"/><rect x="765.0" y="249.5" width="1" height="4" fill="#3a3a3a"/><rect x="767.0" y="249.5" width="1" height="4" fill="#3a3a3a"/><rect x="769.0" y="249.5" width="1" height="4" fill="#3a3a3a"/><rect x="751.0" y="289.0" width="1" height="4" fill="#3a3a3a"/><rect x="753.0" y="289.0" width="1" height="4" fill="#3a3a3a"/><rect x="755.0" y="289.0" width="1" height="4" fill="#3a3a3a"/><rect x="757.0" y="289.0" width="1" height="4" fill="#3a3a3a"/><rect x="759.0" y="289.0" width="1" height="4" fill="#3a3a3a"/><rect x="761.0" y="289.0" width="1" height="4" fill="#3a3a3a"/><rect x="763.0" y="289.0" width="1" height="4" fill="#3a3a3a"/><rect x="765.0" y="289.0" width="1" height="4" fill="#3a3a3a"/><rect x="767.0" y="289.0" width="1" height="4" fill="#3a3a3a"/><rect x="769.0" y="289.0" width="1" height="4" fill="#3a3a3a"/><rect x="751.0" y="384.0" width="1" height="4" fill="#3a3a3a"/><rect x="753.0" y="384.0" width="1" height="4" fill="#3a3a3a"/><rect x="755.0" y="384.0" width="1" height="4" fill="#3a3a3a"/><rect x="757.0" y="384.0" width="1" height="4" fill="#3a3a3a"/><rect x="759.0" y="384.0" width="1" height="4" fill="#3a3a3a"/><rect x="761.0" y="384.0" width="1" height="4" fill="#3a3a3a"/><rect x="763.0" y="384.0" width="1" height="4" fill="#3a3a3a"/><rect x="765.0" y="384.0" width="1" height="4" fill="#3a3a3a"/><rect x="767.0" y="384.0" width="1" height="4" fill="#3a3a3a"/><rect x="769.0" y="384.0" width="1" height="4" fill="#3a3a3a"/>
<path d="M755.6,100 L760.6,88.6 L765.6,100 M757.6,95.6 L763.6,95.6" fill="none" stroke="#cbcbcb" stroke-width="2.1" stroke-linejoin="round" stroke-linecap="round"/><rect x="768" y="85.5" width="1.2" height="17.5" fill="#cbcbcb"/>
<path d="M763,116 L757.8,116 Q754.8,116 754.8,119.3 Q754.8,122.6 757.8,122.6 L763,122.6 Z" fill="#cbcbcb"/><rect x="762" y="116" width="4.4" height="1.6" fill="#cbcbcb"/><rect x="761.9" y="116" width="1.7" height="14.5" fill="#cbcbcb"/><rect x="764.6" y="116" width="1.7" height="14.5" fill="#cbcbcb"/>
<path fill-rule="evenodd" fill="#bdbdbd" d="M765.6,141.3 C769.5,141.3 769.3,146.5 767.6,151.3 C765.8,156.2 762.2,158 759.2,158 C755,158 754.2,153.8 755.8,148.6 C757.4,143.6 761,141.3 765.6,141.3 Z M765.2,142.3 C763.2,142.3 761.3,145.2 760,149.6 C758.8,153.8 758.7,157 760.5,157 C762.6,157 764.3,154 765.6,149.8 C766.9,145.6 767.2,142.3 765.2,142.3 Z"/>
<path d="M755.2,182.8 L767.8,189.3 L755.2,195.8 Z" fill="#cbcbcb"/>
<path d="M760.4,223 L754,223 L754,236.9 L768,236.9 L768,229.3" fill="none" stroke="#cbcbcb" stroke-width="2"/><path d="M763.8,227 L769.6,221.2 M764.3,221 L770,221 L770,227.6" fill="none" stroke="#cbcbcb" stroke-width="2"/>
<rect x="755" y="262.8" width="13" height="13" fill="none" stroke="#cbcbcb" stroke-width="1"/>
<rect x="752.7" y="260.5" width="2.6" height="2.6" fill="#cbcbcb"/><rect x="752.7" y="268.0" width="2.6" height="2.6" fill="#cbcbcb"/><rect x="752.7" y="275.5" width="2.6" height="2.6" fill="#cbcbcb"/><rect x="760.2" y="260.5" width="2.6" height="2.6" fill="#cbcbcb"/><rect x="760.2" y="275.5" width="2.6" height="2.6" fill="#cbcbcb"/><rect x="767.7" y="260.5" width="2.6" height="2.6" fill="#cbcbcb"/><rect x="767.7" y="268.0" width="2.6" height="2.6" fill="#cbcbcb"/><rect x="767.7" y="275.5" width="2.6" height="2.6" fill="#cbcbcb"/><rect x="761" y="268.8" width="1.2" height="1.2" fill="#cbcbcb"/><circle cx="761.7" cy="305" r="3.9" fill="#cbcbcb"/><circle cx="757.2" cy="310.6" r="3.9" fill="#cbcbcb"/><circle cx="766.2" cy="310.6" r="3.9" fill="#cbcbcb"/><path d="M760.7,310 L762.7,310 L763.5,315.5 L766.5,317.6 L757,317.6 L760,315.5 Z" fill="#cbcbcb"/><rect x="757.3" y="337.8" width="8.4" height="8" fill="#cbcbcb"/><path d="M754.2,330 Q755,327.5 757,328.5 L759.5,337 L757.8,337 Z" fill="#cbcbcb"/><path d="M758.8,337 L759,327 Q759.7,325.5 760.6,327 L761,337 Z" fill="#cbcbcb"/><path d="M762.5,337 L765,332 Q767,329.5 769.8,332.8 Q767,333 765.6,334 L764.2,337 Z" fill="#cbcbcb"/><rect x="757" y="357" width="12.6" height="12.2" fill="none" stroke="#cbcbcb" stroke-width="1.1"/><rect x="753.5" y="363" width="5" height="5" fill="#535353" stroke="#cbcbcb" stroke-width="1.1"/><rect x="756.5" y="366.3" width="5" height="5" fill="#535353" stroke="#cbcbcb" stroke-width="1.1"/><rect x="753.3" y="397.1" width="16.7" height="1.5" fill="#a8a8a8"/><rect x="753.3" y="401.2" width="16.7" height="2" fill="#cbcbcb"/><rect x="753.3" y="406" width="16.7" height="3" fill="#cbcbcb"/><defs><linearGradient id="gr" x1="0" x2="1"><stop offset="0" stop-color="#c8c8c8"/><stop offset="1" stop-color="#3c3c3c"/></linearGradient><linearGradient id="sp" x1="0" x2="1"><stop offset="0" stop-color="#ff0000"/><stop offset="0.1667" stop-color="#ffff00"/><stop offset="0.3333" stop-color="#00ff00"/><stop offset="0.5" stop-color="#00ffff"/><stop offset="0.6667" stop-color="#0000ff"/><stop offset="0.8333" stop-color="#ff00ff"/><stop offset="1" stop-color="#ff0000"/></linearGradient><linearGradient id="spv" x1="0" x2="0" y1="0" y2="1"><stop offset="0" stop-color="#fff" stop-opacity="1"/><stop offset="0.5" stop-color="#fff" stop-opacity="0"/><stop offset="0.5" stop-color="#000" stop-opacity="0"/><stop offset="1" stop-color="#000" stop-opacity="1"/></linearGradient></defs><rect x="753.8" y="425" width="15.8" height="10.8" fill="url(#gr)" stroke="#cbcbcb" stroke-width="1"/><circle cx="758.2" cy="455.9" r="6" fill="#cbcbcb"/><circle cx="763.4" cy="460.4" r="6.2" fill="#535353"/><circle cx="763.4" cy="460.4" r="5.4" fill="#8e8e8e" stroke="#cbcbcb" stroke-width="1.1"/><path d="M758.5,460 A5,5 0 0 1 763,455.5 L763,460 Z" fill="#a5a5a5"/><path d="M762.3,478.2 L769,478.2 L769,493 L754,493 L754,486.8 A6.2,6.2 0 0 0 762.3,478.2 Z" fill="#cbcbcb"/><circle cx="756.3" cy="480.4" r="3.3" fill="#cbcbcb"/><circle cx="758.90" cy="515.30" r="4.30" fill="none" stroke="#cbcbcb" stroke-width="2.60"/><rect x="757.70" y="508.50" width="2.40" height="2.50" fill="#cbcbcb" transform="rotate(22.5 758.90 515.30)"/><rect x="757.70" y="508.50" width="2.40" height="2.50" fill="#cbcbcb" transform="rotate(67.5 758.90 515.30)"/><rect x="757.70" y="508.50" width="2.40" height="2.50" fill="#cbcbcb" transform="rotate(112.5 758.90 515.30)"/><rect x="757.70" y="508.50" width="2.40" height="2.50" fill="#cbcbcb" transform="rotate(157.5 758.90 515.30)"/><rect x="757.70" y="508.50" width="2.40" height="2.50" fill="#cbcbcb" transform="rotate(202.5 758.90 515.30)"/><rect x="757.70" y="508.50" width="2.40" height="2.50" fill="#cbcbcb" transform="rotate(247.5 758.90 515.30)"/><rect x="757.70" y="508.50" width="2.40" height="2.50" fill="#cbcbcb" transform="rotate(292.5 758.90 515.30)"/><rect x="757.70" y="508.50" width="2.40" height="2.50" fill="#cbcbcb" transform="rotate(337.5 758.90 515.30)"/><circle cx="766.40" cy="507.60" r="3.00" fill="none" stroke="#cbcbcb" stroke-width="1.80"/><rect x="765.50" y="502.80" width="1.80" height="1.80" fill="#cbcbcb" transform="rotate(19.7 766.40 507.60)"/><rect x="765.50" y="502.80" width="1.80" height="1.80" fill="#cbcbcb" transform="rotate(71.1 766.40 507.60)"/><rect x="765.50" y="502.80" width="1.80" height="1.80" fill="#cbcbcb" transform="rotate(122.5 766.40 507.60)"/><rect x="765.50" y="502.80" width="1.80" height="1.80" fill="#cbcbcb" transform="rotate(174.0 766.40 507.60)"/><rect x="765.50" y="502.80" width="1.80" height="1.80" fill="#cbcbcb" transform="rotate(225.4 766.40 507.60)"/><rect x="765.50" y="502.80" width="1.80" height="1.80" fill="#cbcbcb" transform="rotate(276.8 766.40 507.60)"/><rect x="765.50" y="502.80" width="1.80" height="1.80" fill="#cbcbcb" transform="rotate(328.3 766.40 507.60)"/></svg>
<!-- ================= PANELS ================= -->
<div class="a" style="left:781.5px;top:72px;width:219px;height:26px;background:#434343"></div>
<div class="a" style="left:815.7px;top:72px;width:45px;height:26px;background:#535353"></div>
<div class="a" style="left:861px;top:72px;width:1px;height:26px;background:#3b3b3b"></div>
<div class="a" style="left:902px;top:72px;width:1px;height:26px;background:#3b3b3b"></div>
<div class="a" style="left:936px;top:72px;width:1px;height:26px;background:#3b3b3b"></div>
<div class="a" style="left:977px;top:72px;width:1px;height:26px;background:#3b3b3b"></div>
<div class="a" style="left:781.5px;top:98px;width:219px;height:162.5px;background:#535353"></div>
<div class="lbl" style="left:791px;top:78px;color:#a3a3a3;width:24px;overflow:hidden">色板</div>
<svg style="left:819.5px;top:80.5px" width="6" height="10"><polyline points="0.7,3.6 3,1.2 5.3,3.6" fill="none" stroke="#c8c8c8" stroke-width="1.1"/><polyline points="0.7,6.4 3,8.8 5.3,6.4" fill="none" stroke="#c8c8c8" stroke-width="1.1"/></svg>
<div class="lbl" style="left:830px;top:78px;color:#e8e8e8">颜色</div>
<div class="lbl" style="left:870px;top:78px;color:#a3a3a3;width:31.5px;overflow:hidden">颜色参考</div>
<div class="lbl" style="left:911px;top:78px;color:#a3a3a3">对齐</div>
<div class="lbl" style="left:945px;top:78px;color:#a3a3a3;width:31.5px;overflow:hidden">路径查找器</div>
<!-- fill/stroke small icons -->
<svg style="left:0;top:0" width="1000" height="636">
<rect x="786.8" y="104.2" width="8" height="8" fill="#111" stroke="#8a8a8a" stroke-width="0.8"/><rect x="789.8" y="107.2" width="8" height="8" fill="#111" stroke="#8a8a8a" stroke-width="0.8"/><rect x="787.6" y="105" width="6.4" height="6.4" fill="#fff"/><rect x="791.8" y="109.2" width="4" height="4" fill="none" stroke="#ddd" stroke-width="0.8"/>
<path d="M809.5,108.6 L811.5,108.6 Q814,108.6 814,111 L814,113.5" fill="none" stroke="#c8c8c8" stroke-width="1.6"/><path d="M806.6,108.6 L810,105.6 L810,111.6 Z M814,116.4 L811,113 L817,113 Z" fill="#c8c8c8"/>
<rect x="787" y="122.3" width="18.4" height="17.8" fill="#fff" stroke="#3a3a3a" stroke-width="0.6"/><line x1="787.8" y1="139.4" x2="804.8" y2="123" stroke="#ff1a1a" stroke-width="1.8"/>
<rect x="797" y="132.2" width="17.6" height="18" fill="#080808" stroke="#dcdcdc" stroke-width="1"/><rect x="801.2" y="136.6" width="9.8" height="9.4" fill="#535353" stroke="#f0f0f0" stroke-width="0.9"/>
<text x="833" y="121" font-family="Liberation Serif" font-size="11" fill="#c8c8c8">R</text>
<text x="832.6" y="153" font-family="Liberation Serif" font-size="11" fill="#c8c8c8">G</text>
<text x="833" y="185" font-family="Liberation Serif" font-size="11" fill="#c8c8c8">B</text>
<defs><linearGradient id="gR" x1="0" x2="1"><stop offset="0" stop-color="#000"/><stop offset="1" stop-color="#ff0000"/></linearGradient><linearGradient id="gG" x1="0" x2="1"><stop offset="0" stop-color="#000"/><stop offset="1" stop-color="#00ff00"/></linearGradient><linearGradient id="gB" x1="0" x2="1"><stop offset="0" stop-color="#000"/><stop offset="1" stop-color="#0000ff"/></linearGradient></defs>
<rect x="850.8" y="114.3" width="98.6" height="3.7" fill="url(#gR)"/>
<rect x="850.8" y="146.3" width="98.6" height="3.8" fill="url(#gG)"/>
<rect x="850.8" y="178.5" width="98.6" height="3.8" fill="url(#gB)"/>
<path d="M845.8,125.8 L845.8,121.5 L850.5,117.6 L855.2,121.5 L855.2,125.8 Z" fill="#cfcfcf"/>
<path d="M845.8,157.8 L845.8,153.5 L850.5,149.6 L855.2,153.5 L855.2,157.8 Z" fill="#cfcfcf"/>
<path d="M845.8,189.8 L845.8,185.5 L850.5,181.6 L855.2,185.5 L855.2,189.8 Z" fill="#cfcfcf"/>
<rect x="958" y="106.4" width="33.4" height="19.6" rx="3" fill="#474747" stroke="#5c5c5c" stroke-width="1"/>
<rect x="958" y="138.6" width="33.4" height="19.4" rx="3" fill="#474747" stroke="#5c5c5c" stroke-width="1"/>
<rect x="958" y="171" width="33.4" height="19.2" rx="3" fill="#474747" stroke="#5c5c5c" stroke-width="1"/>
<rect x="786.8" y="209.4" width="38.6" height="13.2" fill="#2e2e2e"/>
<rect x="787.6" y="210.2" width="12" height="11.6" fill="#fff"/><line x1="788" y1="221.4" x2="799.2" y2="210.6" stroke="#ff1a1a" stroke-width="1.6"/>
<rect x="800.4" y="210.2" width="12" height="11.6" fill="#000"/>
<rect x="813.2" y="210.2" width="11.6" height="11.6" fill="#fff"/>
<text x="945.8" y="221" font-family="Liberation Serif" font-size="10.5" fill="#b8b8b8">#</text>
<rect x="956" y="207" width="43" height="19" rx="3" fill="#474747" stroke="#5c5c5c" stroke-width="1"/>
<rect x="788.2" y="233.7" width="210" height="20.3" fill="url(#sp)"/><rect x="788.2" y="233.7" width="210" height="20.3" fill="url(#spv)"/>
</svg>
<div class="lbl" style="left:961px;top:106.5px;font-size:11px;color:#e8e8e8">0</div>
<div class="lbl" style="left:961px;top:138.5px;font-size:11px;color:#e8e8e8">0</div>
<div class="lbl" style="left:961px;top:171.0px;font-size:11px;color:#e8e8e8">0</div>
<div class="lbl" style="left:960.5px;top:208.5px;font-size:10.5px;color:#e8e8e8;letter-spacing:-0.35px">000000</div>
<!-- separator -->
<div class="a" style="left:781.5px;top:260.5px;width:219px;height:3px;background:#3d3d3d"></div>
<!-- layers tabs -->
<div class="a" style="left:781.5px;top:263.5px;width:219px;height:26.5px;background:#434343"></div>
<div class="a" style="left:781.5px;top:263.5px;width:41.5px;height:26.5px;background:#535353"></div>
<div class="a" style="left:862.5px;top:263.5px;width:1px;height:26.5px;background:#3b3b3b"></div>
<div class="a" style="left:905px;top:263.5px;width:1px;height:26.5px;background:#3b3b3b"></div>
<div class="lbl" style="left:791.5px;top:270px;color:#e8e8e8">图层</div>
<div class="lbl" style="left:832.5px;top:270px;color:#a3a3a3">画板</div>
<div class="lbl" style="left:873px;top:270px;color:#a3a3a3">外观</div>
<div class="a" style="left:781.5px;top:290px;width:219px;height:346px;background:#535353"></div>
<!-- layer row -->
<div class="a" style="left:787.6px;top:296.8px;width:213px;height:19.7px;background:#4e6179"></div>
<div class="a" style="left:807px;top:296.8px;width:1px;height:19.7px;background:#5a6a7e"></div>
<div class="a" style="left:834px;top:296.8px;width:1px;height:19.7px;background:#5a6a7e"></div>
<div class="a" style="left:975px;top:296.8px;width:1px;height:19.7px;background:#5a6a7e"></div>
<div class="a" style="left:829.3px;top:298px;width:3.6px;height:17.6px;background:#4a7cff"></div>
<svg style="left:0;top:0" width="1000" height="636">
<path d="M790.6,306 Q796.7,299.8 802.9,306 Q796.7,312.2 790.6,306 Z" fill="#c8c8c8"/><circle cx="796.7" cy="306" r="2.4" fill="none" stroke="#8394a8" stroke-width="1"/><circle cx="796.4" cy="305.6" r="0.8" fill="#8394a8"/>
<polyline points="840.6,303 844.6,306.5 840.6,310" fill="none" stroke="#e0e0e0" stroke-width="1.3"/>
<rect x="858.5" y="298.5" width="16" height="16.6" rx="1" fill="#fff" stroke="#111" stroke-width="1.4"/>
<path d="M862.8,299.6 C860,302 860.2,304.6 862.2,306.6 C864,308.6 863,311.6 861.2,314.6" fill="none" stroke="#111" stroke-width="1.7"/>
<path d="M871.6,300.3 C873.3,302.5 872.6,305 870.9,307.5 C869.9,309 870.3,311 871.4,312.3" fill="none" stroke="#111" stroke-width="1.7"/>
<circle cx="985.3" cy="306.9" r="3.6" fill="none" stroke="#d0d0d0" stroke-width="1.2"/>
<rect x="995.5" y="303.8" width="6" height="5.6" fill="#4a7cff" stroke="#111" stroke-width="1"/>
</svg>
<div class="lbl" style="left:880.5px;top:299.5px;color:#e0e0e0">图层</div>
<div class="lbl" style="left:909px;top:299.5px;color:#e0e0e0;font-family:'Liberation Serif',serif;font-size:12px">1</div>
<!-- DOCK_END -->
</body></html>
